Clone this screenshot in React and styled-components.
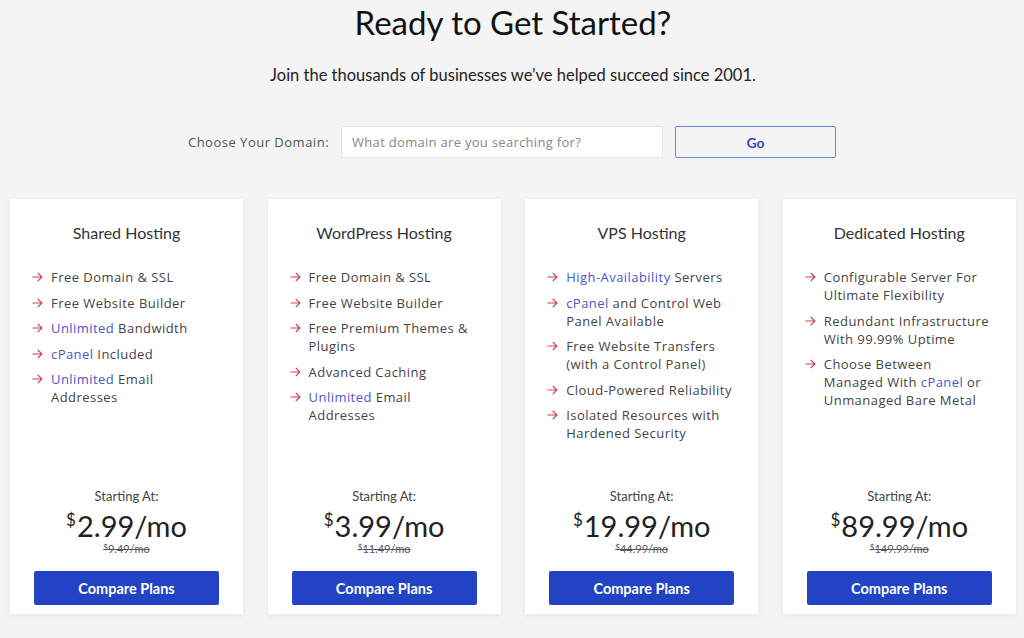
import React from "react";
import styled, { createGlobalStyle } from "styled-components";

const GlobalStyle = createGlobalStyle`
  body {
    margin: 0;
    background: #f4f4f4;
    font-family: "Open Sans", "Liberation Sans", sans-serif;
  }
`;

const plans = [
  {
    title: "Shared Hosting",
    features: [
      [["Free Domain & SSL"]],
      [["Free Website Builder"]],
      [["Unlimited", true], [" Bandwidth"]],
      [["cPanel", true], [" Included"]],
      [["Unlimited", true], [" Email Addresses"]],
    ],
    price: "2.99",
    old: "9.49",
  },
  {
    title: "WordPress Hosting",
    features: [
      [["Free Domain & SSL"]],
      [["Free Website Builder"]],
      [["Free Premium Themes & Plugins"]],
      [["Advanced Caching"]],
      [["Unlimited", true], [" Email Addresses"]],
    ],
    price: "3.99",
    old: "11.49",
  },
  {
    title: "VPS Hosting",
    features: [
      [["High-Availability", true], [" Servers"]],
      [["cPanel", true], [" and Control Web Panel Available"]],
      [["Free Website Transfers (with a Control Panel)"]],
      [["Cloud-Powered Reliability"]],
      [["Isolated Resources with Hardened Security"]],
    ],
    price: "19.99",
    old: "44.99",
  },
  {
    title: "Dedicated Hosting",
    features: [
      [["Configurable Server For Ultimate Flexibility"]],
      [["Redundant Infrastructure With 99.99% Uptime"]],
      [["Choose Between Managed With "], ["cPanel", true], [" or Unmanaged Bare Metal"]],
    ],
    price: "89.99",
    old: "149.99",
  },
];

const Arrow = () => (
  <svg width="11" height="10" viewBox="0 0 11 10" fill="none">
    <path d="M0.5 5H10M5.8 1L10 5L5.8 9" stroke="#d0424a" strokeWidth="1.1" />
  </svg>
);

export default function App() {
  return (
    <Page>
      <GlobalStyle />
      <Heading>Ready to Get Started?</Heading>
      <Subtitle>Join the thousands of businesses we’ve helped succeed since 2001.</Subtitle>

      <DomainRow>
        <DomainLabel>Choose Your Domain:</DomainLabel>
        <DomainInput placeholder="What domain are you searching for?" />
        <GoButton>Go</GoButton>
      </DomainRow>

      <Cards>
        {plans.map((plan) => (
          <Card key={plan.title}>
            <CardTitle>{plan.title}</CardTitle>
            <Features>
              {plan.features.map((parts, i) => (
                <Feature key={i}>
                  <ArrowWrap>
                    <Arrow />
                  </ArrowWrap>
                  <FeatureText>
                    {parts.map(([text, hl], j) =>
                      hl ? <Highlight key={j}>{text}</Highlight> : <React.Fragment key={j}>{text}</React.Fragment>
                    )}
                  </FeatureText>
                </Feature>
              ))}
            </Features>

            <PriceBlock>
              <StartLabel>Starting At:</StartLabel>
              <Price>
                <Dollar>$</Dollar>
                {plan.price}/mo
              </Price>
              <OldPrice>
                <small>$</small>
                {plan.old}/mo
              </OldPrice>
              <CompareButton>Compare Plans</CompareButton>
            </PriceBlock>
          </Card>
        ))}
      </Cards>
    </Page>
  );
}

// ── Styled Components ─────────────────────────────────────────
const Page = styled.div`
  padding: 3px 8px 24px 10px;
  display: flex;
  flex-direction: column;
  align-items: center;
`;

const Heading = styled.h1`
  margin: 0;
  font-family: "Lato", sans-serif;
  font-weight: 400;
  font-size: 33px;
  line-height: 38px;
  color: #111;
`;

const Subtitle = styled.p`
  margin: 24px 0 0;
  font-family: "Lato", sans-serif;
  font-size: 16.5px;
  line-height: 20px;
  color: #222;
`;

const DomainRow = styled.div`
  display: flex;
  align-items: center;
  margin-top: 41px;
  margin-left: -2px;
`;

const DomainLabel = styled.label`
  font-size: 13px;
  color: #555;
  margin-right: 12px;
  letter-spacing: 0.5px;
`;

const DomainInput = styled.input`
  box-sizing: border-box;
  width: 322px;
  height: 32px;
  border: 1px solid #e6e6e6;
  background: #fff;
  padding: 0 10px;
  font-family: "Open Sans", sans-serif;
  font-size: 13px;
  outline: none;
  &::placeholder {
    color: #888;
    letter-spacing: 0.3px;
  }
`;

const GoButton = styled.button`
  box-sizing: border-box;
  width: 161px;
  height: 32px;
  margin-left: 12px;
  background: transparent;
  border: 1px solid #6b83dc;
  border-radius: 2px;
  color: #3747b8;
  font-family: "Lato", sans-serif;
  font-weight: 700;
  font-size: 14px;
  cursor: pointer;
`;

const Cards = styled.div`
  align-self: stretch;
  display: grid;
  grid-template-columns: repeat(4, 233px);
  gap: 24.6px;
  margin-top: 41px;
`;

const Card = styled.div`
  box-sizing: border-box;
  height: 415px;
  background: #fff;
  box-shadow: 0 2px 6px rgba(0, 0, 0, 0.06);
  padding: 24px 22px 9px;
  display: flex;
  flex-direction: column;
`;

const CardTitle = styled.h3`
  margin: 0;
  text-align: center;
  font-family: "Lato", sans-serif;
  font-weight: 400;
  font-size: 16px;
  line-height: 20px;
  color: #333;
`;

const Features = styled.ul`
  list-style: none;
  margin: 25px 0 0;
  padding: 0;
  display: flex;
  flex-direction: column;
  gap: 7.6px;
`;

const Feature = styled.li`
  display: flex;
  align-items: flex-start;
  font-size: 13px;
  line-height: 18px;
  color: #444;
  letter-spacing: 0.45px;
`;

const ArrowWrap = styled.span`
  flex: none;
  width: 19px;
  height: 18px;
  display: flex;
  align-items: center;
`;

const FeatureText = styled.span`
  flex: 1;
`;

const Highlight = styled.span`
  color: #4a55c9;
`;

const PriceBlock = styled.div`
  margin-top: auto;
  display: flex;
  flex-direction: column;
  align-items: center;
`;

const StartLabel = styled.div`
  font-family: "Lato", sans-serif;
  font-size: 13px;
  line-height: 16px;
  color: #444;
`;

const Price = styled.div`
  margin-top: 7px;
  font-family: "Lato", sans-serif;
  font-size: 29px;
  line-height: 30px;
  color: #222;
`;

const Dollar = styled.sup`
  font-size: 17px;
  vertical-align: 11px;
  line-height: 0;
  margin-right: 1px;
`;

const OldPrice = styled.div`
  font-family: "Lato", sans-serif;
  font-size: 11px;
  line-height: 12px;
  color: #555;
  text-decoration: line-through;
  small {
    font-size: 8px;
    vertical-align: 3px;
  }
`;

const CompareButton = styled.button`
  margin-top: 16px;
  width: 185px;
  height: 34px;
  border: none;
  border-radius: 2px;
  background: #2244c4;
  color: #fff;
  font-family: "Lato", sans-serif;
  font-weight: 700;
  font-size: 14.5px;
  cursor: pointer;
`;
